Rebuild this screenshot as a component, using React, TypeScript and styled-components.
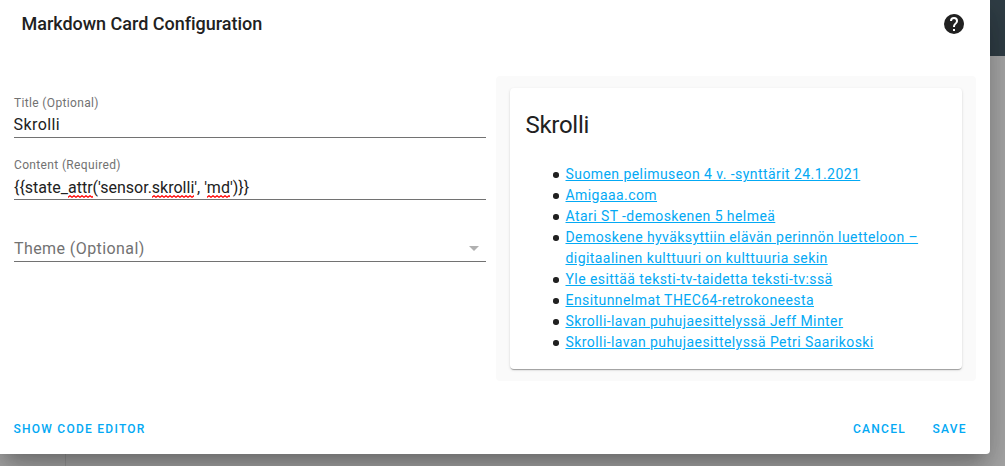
import React from "react";
import styled, { createGlobalStyle } from "styled-components";

const Global = createGlobalStyle`
  * { box-sizing: border-box; }
  body {
    margin: 0;
    overflow: hidden;
    font-family: Roboto, "Liberation Sans", sans-serif;
    color: #212121;
    -webkit-font-smoothing: antialiased;
  }
`;

const Page = styled.div`
  position: relative;
  height: 466px;
  overflow: hidden;
  background: #aaaaaa;
`;

const Backdrop = styled.div`
  position: absolute;
  inset: 0;
  display: grid;
  grid-template-columns: 66px 1fr;
  grid-template-rows: 56px 1fr;
`;

const AppBar = styled.div`
  grid-column: 1 / -1;
  background: #303e46;
`;

const Sidebar = styled.div`
  border-right: 1px solid #999;
`;

const Dialog = styled.section`
  position: relative;
  width: 990px;
  height: 454px;
  display: flex;
  flex-direction: column;
  background: #fff;
  border-radius: 0 0 4px 0;
  box-shadow: 0 11px 15px -7px rgba(0, 0, 0, 0.2), 0 24px 38px 3px rgba(0, 0, 0, 0.14),
    0 9px 46px 8px rgba(0, 0, 0, 0.12);
`;

const Header = styled.header`
  display: flex;
  align-items: center;
  justify-content: space-between;
  height: 48px;
  padding: 0 24px 0 21.5px;
  flex: none;
`;

const Heading = styled.h2`
  margin: 0;
  font-size: 18px;
  font-weight: 500;
  line-height: 24px;
  letter-spacing: -0.02px;
`;

const HelpIcon = styled.svg`
  width: 24px;
  height: 24px;
  fill: #212121;
`;

const Content = styled.div`
  flex: 1;
  display: grid;
  grid-template-columns: 472px 480px;
  column-gap: 10px;
  align-items: start;
  padding: 28px 14px 0;
`;

const Form = styled.div`
  display: flex;
  flex-direction: column;
  padding-top: 17px;
`;

const Field = styled.label`
  display: flex;
  flex-direction: column;
  height: 62px;
`;

const Label = styled.span`
  height: 20px;
  font-size: 12px;
  line-height: 20px;
  letter-spacing: 0.35px;
  color: #727272;
`;

const Value = styled.span<{ $tracking?: number; $drop?: number }>`
  height: 25px;
  padding-top: ${(p) => p.$drop ?? 0}px;
  border-bottom: 1px solid #727272;
  font-size: 16px;
  line-height: 24px;
  letter-spacing: ${(p) => p.$tracking ?? 0}px;
  text-indent: ${(p) => (p.$tracking ? "-0.4px" : "0")};
`;

const Misspelled = styled.span`
  padding-bottom: 1px;
  background: url("data:image/svg+xml,%3Csvg xmlns='http://www.w3.org/2000/svg' width='4' height='3'%3E%3Cpath d='M-2 .7L0 2.3L2 .7L4 2.3L6 .7' fill='none' stroke='red' stroke-width='1.2'/%3E%3C/svg%3E")
    left bottom / 4px 3px repeat-x;
`;

const Select = styled.div`
  display: flex;
  align-items: center;
  justify-content: space-between;
  height: 28px;
  margin-top: 17px;
  padding: 2px 7px 0 0;
  border-bottom: 1px solid #727272;
  font-size: 16px;
  letter-spacing: 0.42px;
  color: #727272;
`;

const Caret = styled.svg`
  width: 10px;
  height: 5px;
  fill: #b0b0b0;
`;

const Preview = styled.div`
  height: 305px;
  padding: 12px 14px;
  border-radius: 4px;
  background: #fafafa;
`;

const Card = styled.article`
  height: 281px;
  padding: 0 16px 0 15.5px;
  border-radius: 4px;
  background: #fff;
  box-shadow: 0 2px 1px -1px rgba(0, 0, 0, 0.2), 0 1px 1px 0 rgba(0, 0, 0, 0.14),
    0 1px 3px 0 rgba(0, 0, 0, 0.12);
`;

const CardTitle = styled.h1`
  margin: 0;
  padding-top: 13px;
  font-size: 24px;
  font-weight: 400;
  line-height: 48px;
  letter-spacing: -0.29px;
`;

const LinkList = styled.ul`
  margin: 15px 0 0;
  padding-left: 40px;
  list-style: none;
  font-size: 14px;
  line-height: 21px;
  letter-spacing: 0.43px;
`;

const LinkItem = styled.li`
  &::before {
    content: "";
    display: inline-block;
    width: 5.5px;
    height: 5.5px;
    margin: 0 7px 0 -12.5px;
    border-radius: 50%;
    background: #212121;
    vertical-align: 1.5px;
  }
`;

const Link = styled.a`
  color: #03a9f4;
  text-decoration: underline;
`;

const Actions = styled.footer`
  display: flex;
  align-items: center;
  gap: 26.5px;
  height: 50px;
  padding: 0 23.3px 0 13.5px;
`;

const Action = styled.button<{ $start?: boolean }>`
  margin: 0;
  margin-right: ${(p) => (p.$start ? "auto" : "0")};
  padding: 0;
  border: 0;
  background: none;
  font-family: inherit;
  font-size: 12px;
  font-weight: 500;
  letter-spacing: 1.25px;
  text-transform: uppercase;
  color: #03a9f4;
`;

const links = [
  "Suomen pelimuseon 4 v. -synttärit 24.1.2021",
  "Amigaaa.com",
  "Atari ST -demoskenen 5 helmeä",
  "Demoskene hyväksyttiin elävän perinnön luetteloon – digitaalinen kulttuuri on kulttuuria sekin",
  "Yle esittää teksti-tv-taidetta teksti-tv:ssä",
  "Ensitunnelmat THEC64-retrokoneesta",
  "Skrolli-lavan puhujaesittelyssä Jeff Minter",
  "Skrolli-lavan puhujaesittelyssä Petri Saarikoski",
];

export default function App() {
  return (
    <Page>
      <Global />
      <Backdrop>
        <AppBar />
        <Sidebar />
      </Backdrop>
      <Dialog>
        <Header>
          <Heading>Markdown Card Configuration</Heading>
          <HelpIcon viewBox="0 0 24 24">
            <path d="M15.07,11.25L14.17,12.17C13.45,12.89 13,13.5 13,15H11V14.5C11,13.39 11.45,12.39 12.17,11.67L13.41,10.41C13.78,10.05 14,9.55 14,9C14,7.89 13.1,7 12,7A2,2 0 0,0 10,9H8A4,4 0 0,1 12,5A4,4 0 0,1 16,9C16,9.88 15.64,10.67 15.07,11.25M13,19H11V17H13M12,2A10,10 0 0,0 2,12A10,10 0 0,0 12,22A10,10 0 0,0 22,12C22,6.47 17.5,2 12,2Z" />
          </HelpIcon>
        </Header>
        <Content>
          <Form>
            <Field>
              <Label>Title (Optional)</Label>
              <Value $tracking={0.4}>Skrolli</Value>
            </Field>
            <Field>
              <Label>Content (Required)</Label>
              <Value $drop={1}>
                {"{{state_"}
                <Misspelled>attr</Misspelled>
                {"('sensor."}
                <Misspelled>skrolli</Misspelled>
                {"', '"}
                <Misspelled>md</Misspelled>
                {"')}}"}
              </Value>
            </Field>
            <Select>
              Theme (Optional)
              <Caret viewBox="0 0 10 5">
                <path d="M0 0h10L5 5z" />
              </Caret>
            </Select>
          </Form>
          <Preview>
            <Card>
              <CardTitle>Skrolli</CardTitle>
              <LinkList>
                {links.map((text) => (
                  <LinkItem key={text}>
                    <Link>{text}</Link>
                  </LinkItem>
                ))}
              </LinkList>
            </Card>
          </Preview>
        </Content>
        <Actions>
          <Action $start>Show code editor</Action>
          <Action>Cancel</Action>
          <Action>Save</Action>
        </Actions>
      </Dialog>
    </Page>
  );
}
